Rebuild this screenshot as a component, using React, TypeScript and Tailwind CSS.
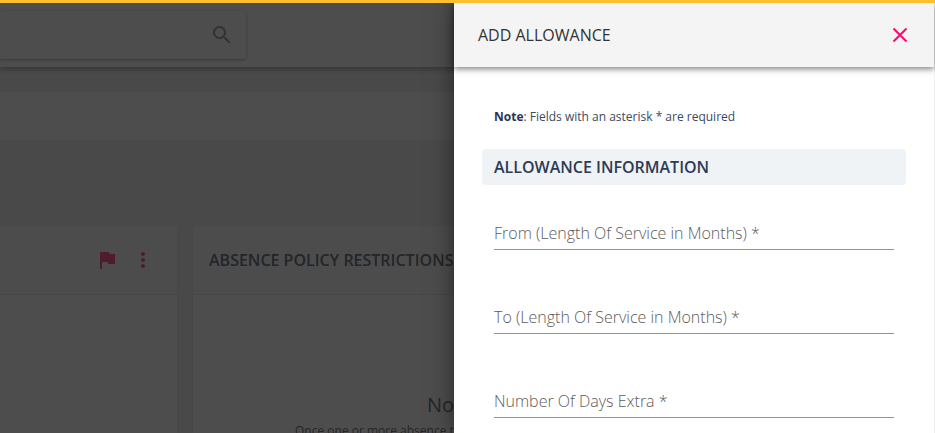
import { useState } from "react";

const FIELDS = [
  { id: "from", label: "From (Length Of Service in Months) *" },
  { id: "to", label: "To (Length Of Service in Months) *" },
  { id: "extra", label: "Number Of Days Extra *" },
];

function Field({ id, label }: { id: string; label: string }) {
  const [value, setValue] = useState("");
  return (
    <div className="grid h-8 border-b border-[#949494]">
      <label
        htmlFor={id}
        className={
          value
            ? "col-start-1 row-start-1 -mt-5 text-xs text-[#757575]"
            : "col-start-1 row-start-1 text-base leading-[30px] font-light text-[#5c5c5c]"
        }
      >
        {label}
      </label>
      <input
        id={id}
        value={value}
        onChange={(e) => setValue(e.target.value)}
        className="col-start-1 row-start-1 w-full bg-transparent text-base text-[#333333] outline-none"
      />
    </div>
  );
}

function Page() {
  return (
    <div className="flex h-full flex-col bg-[#e9ecf1]">
      <header className="z-10 flex h-16 shrink-0 items-start bg-[#fdfdfd] shadow-[0_2px_5px_1px_rgba(0,0,0,0.35)]">
        <form className="mt-2 flex h-12 w-[246px] items-center rounded-r-sm bg-white pr-3 shadow-[0_1px_3px_rgba(0,0,0,0.4)]">
          <input aria-label="Search" className="min-w-0 flex-1 bg-transparent px-3 outline-none" />
          <button type="button" aria-label="Submit search">
            <svg viewBox="0 0 24 24" className="size-6 fill-[#777777]">
              <path d="M15.5 14h-.79l-.28-.27A6.471 6.471 0 0 0 16 9.5 6.5 6.5 0 1 0 9.5 16c1.61 0 3.09-.59 4.23-1.57l.27.28v.79l5 4.99L20.49 19l-4.99-5zm-6 0C7.01 14 5 11.99 5 9.5S7.01 5 9.5 5 14 7.01 14 9.5 11.99 14 9.5 14z" />
            </svg>
          </button>
        </form>
      </header>
      <div className="mt-[25px] h-12 shrink-0 bg-[#fdfdfd]" />
      <main className="mt-[86px] flex min-h-0 flex-1 gap-4">
        <section className="flex w-[177px] shrink-0 flex-col rounded-tr bg-white shadow">
          <div className="flex h-[69px] items-center justify-end gap-3 border-b border-[#e2e6ea] bg-[#f8f9fb] pr-[22px]">
            <button type="button" aria-label="Flag">
              <svg viewBox="0 0 24 24" className="size-6 fill-[#ff0a6c]">
                <path d="M14.4 6 14 4H5v17h2v-7h5.6l.4 2h7V6z" />
              </svg>
            </button>
            <button type="button" aria-label="More options">
              <svg viewBox="0 0 24 24" className="size-6 fill-[#ff0a6c]">
                <path d="M12 8c1.1 0 2-.9 2-2s-.9-2-2-2-2 .9-2 2 .9 2 2 2zm0 2c-1.100 0-2 .9-2 2s.9 2 2 2 2-.9 2-2-.9-2-2-2zm0 6c-1.100 0-2 .9-2 2s.9 2 2 2 2-.9 2-2-.9-2-2-2z" />
              </svg>
            </button>
          </div>
        </section>
        <section className="flex min-w-0 flex-1 flex-col overflow-hidden rounded-tl bg-white shadow">
          <div className="flex h-[69px] shrink-0 items-center border-b border-[#e2e6ea] bg-[#f8f9fb] px-4">
            <h2 className="text-base font-semibold whitespace-nowrap text-[#2d3748]">
              ABSENCE POLICY RESTRICTIONS
            </h2>
          </div>
          <div className="flex flex-col pt-24 pl-[102px] whitespace-nowrap text-[#2d3748]">
            <h3 className="pl-[132px] text-xl leading-7">No data</h3>
            <p className="text-xs leading-6">Once one or more absence types</p>
          </div>
        </section>
      </main>
    </div>
  );
}

export default function App() {
  return (
    <div className="relative h-screen overflow-hidden border-t-[3px] border-[#fdbf2b] font-['Open_Sans','Noto_Sans',sans-serif]">
      <Page />
      <div className="absolute inset-0 z-20 flex justify-end bg-[#212121]/80">
        <aside
          role="dialog"
          aria-labelledby="drawer-title"
          className="flex w-[481px] flex-col border-r border-[#f0f0f0] bg-white shadow-[0_0_22px_rgba(0,0,0,0.5)]"
        >
          <header className="flex h-16 shrink-0 items-center justify-between bg-[#f4f4f4] pr-[22px] pl-6 shadow-[0_2px_6px_rgba(0,0,0,0.5)]">
            <h1 id="drawer-title" className="text-base text-[#333333]">
              ADD ALLOWANCE
            </h1>
            <button type="button" aria-label="Close">
              <svg viewBox="0 0 24 24" className="size-6 fill-none stroke-[#ff0a6c] stroke-2">
                <path d="M5.500 5.500 18.500 18.500M18.500 5.500 5.500 18.500" />
              </svg>
            </button>
          </header>
          <div className="flex flex-col px-7 pt-10">
            <p className="px-3 text-xs leading-5 text-[#3d4862]">
              <strong className="font-bold text-[#2b3553]">Note</strong>: Fields with an asterisk * are required
            </p>
            <h2 className="mt-[22px] rounded bg-[#eff3f6] px-3 text-base leading-9 font-semibold text-[#2d3a55]">
              ALLOWANCE INFORMATION
            </h2>
            <form className="mt-[33px] flex flex-col gap-[52px] px-3">
              {FIELDS.map((f) => (
                <Field key={f.id} {...f} />
              ))}
            </form>
          </div>
        </aside>
      </div>
    </div>
  );
}
